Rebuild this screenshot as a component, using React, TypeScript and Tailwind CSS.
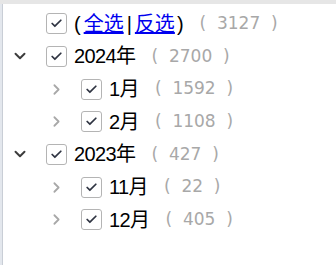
import { ChevronDown, ChevronRight, Check } from "lucide-react";

type Node = {
  label: string;
  count: number;
  open?: boolean;
  children?: Node[];
};

const tree: Node[] = [
  {
    label: "2024年",
    count: 2700,
    open: true,
    children: [
      { label: "1月", count: 1592 },
      { label: "2月", count: 1108 },
    ],
  },
  {
    label: "2023年",
    count: 427,
    open: true,
    children: [
      { label: "11月", count: 22 },
      { label: "12月", count: 405 },
    ],
  },
];

const Box = () => (
  <span className="flex h-[21px] w-[21px] shrink-0 items-center justify-center rounded-[3px] border border-[#b4b4b4] bg-white">
    <Check className="h-[13px] w-[13px] text-[#2f3442]" strokeWidth={3.2} />
  </span>
);

const Count = ({ n }: { n: number }) => (
  <span className="ml-[16px] whitespace-pre font-['DejaVu_Sans',sans-serif] text-[17px] text-[#a8a8a8]">
    {`(  ${n}  )`}
  </span>
);

const Row = ({ node, depth }: { node: Node; depth: number }) => {
  const leaf = !node.children;
  return (
    <>
      <div className={`flex h-[32.7px] items-center ${depth ? "pl-[45px]" : "pl-[8px]"}`}>
        <span className={`flex shrink-0 items-center ${depth ? "w-[33px]" : "w-[35px]"}`}>
          {leaf ? (
            <ChevronRight className="h-[17px] w-[17px] text-[#a8a8a8]" strokeWidth={2.5} />
          ) : (
            <ChevronDown className="h-[18px] w-[18px] text-[#3c3c3c]" strokeWidth={2.6} />
          )}
        </span>
        <Box />
        <span className="ml-[7px] text-[20px] tracking-[-0.6px] text-black">{node.label}</span>
        <Count n={node.count} />
      </div>
      {node.open && node.children?.map((c) => <Row key={c.label} node={c} depth={depth + 1} />)}
    </>
  );
};

export default function App() {
  return (
    <div className="flex h-[265px] w-[336px] flex-col overflow-hidden bg-white font-['Liberation_Sans','Noto_Sans_CJK_SC',sans-serif]">
      <div className="h-[4px] shrink-0 bg-[#e6e6e6]" />
      <div className="flex flex-1">
        <div className="w-[3px] shrink-0 border-r border-[#c9ced6] bg-[#e3e7ed]" />
        <div className="flex-1 pt-[3px]">
          <div className="flex h-[33px] items-center pl-[43px]">
            <Box />
            <span className="ml-[7px] flex items-center text-[20px] text-black">
              <span>(</span>
              <a className="ml-[3px] text-[#0000ee] underline">全选</a>
              <span className="mx-[3px]">|</span>
              <a className="text-[#0000ee] underline">反选</a>
              <span className="ml-[2px]">)</span>
            </span>
            <Count n={3127} />
          </div>
          {tree.map((n) => (
            <Row key={n.label} node={n} depth={0} />
          ))}
        </div>
      </div>
    </div>
  );
}
